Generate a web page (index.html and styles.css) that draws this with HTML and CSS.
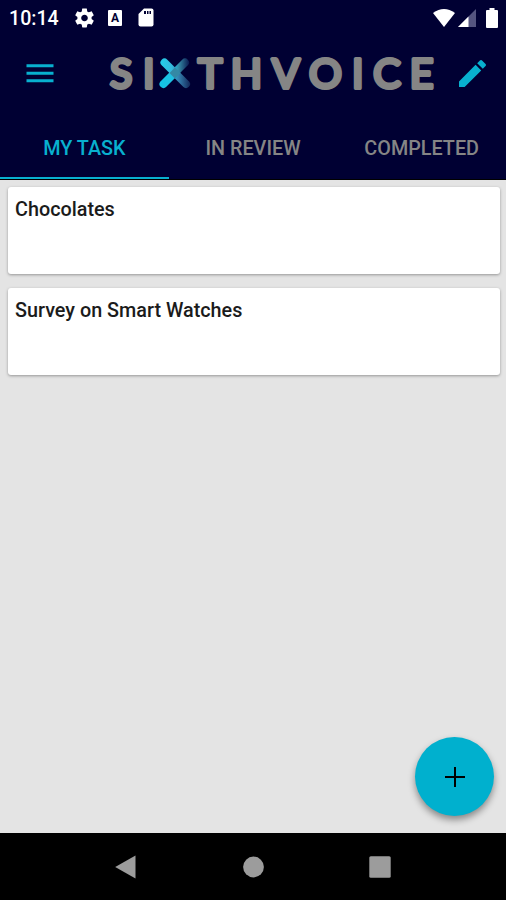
FILE: index.html
```
<!DOCTYPE html>
<html lang="en">
<head>
  <meta charset="UTF-8">
  <meta name="viewport" content="width=device-width, initial-scale=1">
  <title>SixthVoice</title>
  <link rel="stylesheet" href="styles.css">
</head>
<body>
  <header class="header">
    <div class="status-bar">
      <span class="clock">10:14</span>
      <svg class="icon-gear" width="19" height="20" viewBox="2 2 20 20"><path fill="#fff" d="M19.43 12.98c.04-.32.07-.64.07-.98s-.03-.66-.07-.98l2.11-1.65c.19-.15.24-.42.12-.64l-2-3.46c-.12-.22-.39-.3-.61-.22l-2.49 1c-.52-.4-1.08-.73-1.69-.98l-.38-2.65C14.46 2.18 14.25 2 14 2h-4c-.25 0-.46.18-.49.42l-.38 2.65c-.61.25-1.17.59-1.69.98l-2.49-1c-.23-.09-.49 0-.61.22l-2 3.46c-.13.22-.07.49.12.64l2.11 1.65c-.04.32-.07.65-.07.98s.03.66.07.98l-2.11 1.65c-.19.15-.24.42-.12.64l2 3.46c.12.22.39.3.61.22l2.49-1c.52.4 1.08.73 1.69.98l.38 2.65c.03.24.24.42.49.42h4c.25 0 .46-.18.49-.42l.38-2.65c.61-.25 1.17-.59 1.69-.98l2.49 1c.23.09.49 0 .61-.22l2-3.46c.12-.22.07-.49-.12-.64l-2.11-1.65zM12 15.500c-1.930 0-3.500-1.570-3.500-3.500s1.570-3.500 3.500-3.500 3.500 1.570 3.500 3.500-1.570 3.500-3.500 3.500z"/></svg>
      <span class="icon-letter">A</span>
      <svg class="icon-sd" width="16" height="19" viewBox="0 0 16 19"><path fill="#fff" d="M6 0.500H13.500Q15.500 .5 15.500 2.500V16.500Q15.500 18.500 13.500 18.500H2.500Q.5 18.500 .5 16.500V6z"/><path fill="#000033" d="M6 3h2v3H6zM9 3h1.500v3H9zM11.500 3h1.500v3h-1.500z"/></svg>
      <div class="status-right">
        <svg width="22" height="18" viewBox="0 0 22 18"><path fill="#fff" d="M0 4Q11-4 22 4L11 18z"/></svg>
        <svg width="18" height="18" viewBox="0 0 18 18"><path fill="#555580" d="M18 0v18H0z"/><path fill="#fff" d="M10.500 7.500V18H0z"/></svg>
        <svg class="icon-battery" width="12" height="20" viewBox="0 0 12 20"><path fill="#fff" d="M3.500 0h5v2H11q1 0 1 1v16q0 1-1 1H1q-1 0-1-1V3q0-1 1-1h2.500z"/></svg>
      </div>
    </div>

    <div class="toolbar">
      <svg class="icon-menu" width="28" height="20" viewBox="0 0 28 20"><path stroke="#08b0cf" stroke-width="3" d="M.5 1.700h27M.5 9.200h27M.5 16.700h27"/></svg>
      <svg class="logo" width="336" height="70" viewBox="102 39 336 70">
        <defs>
          <linearGradient id="fade" gradientUnits="userSpaceOnUse" x1="162" y1="0" x2="190" y2="0">
            <stop offset="0" stop-color="#13c3e6"/>
            <stop offset=".4" stop-color="#1fc0e2"/>
            <stop offset=".6" stop-color="#3489a5"/>
            <stop offset="1" stop-color="#07104a"/>
          </linearGradient>
          <linearGradient id="beam" gradientUnits="userSpaceOnUse" x1="162" y1="0" x2="190" y2="0">
            <stop offset="0" stop-color="#25cbe8"/>
            <stop offset=".35" stop-color="#35b9dc"/>
            <stop offset=".6" stop-color="#347fae"/>
            <stop offset="1" stop-color="#14285a"/>
          </linearGradient>
        </defs>
        <text class="logo-text" y="88" x="121">S</text>
        <text class="logo-text" y="88" x="148.700">I</text>
        <g fill="none" stroke-width="8" stroke-linecap="round">
          <path stroke="url(#fade)" d="M163.500 84L185 62.500"/>
          <path stroke="url(#beam)" d="M164.500 62.500L186 84"/>
        </g>
        <path fill="#3489a5" d="M175 67.500l5.500 5.500-5.500 5.500-5.500-5.500z"/>
        <text class="logo-text" y="88" x="210">T</text>
        <text class="logo-text" y="88" x="246.500">H</text>
        <text class="logo-text" y="88" x="286">V</text>
        <text class="logo-text" y="88" x="325.500">O</text>
        <text class="logo-text" y="88" x="357.700">I</text>
        <text class="logo-text" y="88" x="387">C</text>
        <text class="logo-text" y="88" x="421.500">E</text>
      </svg>
      <svg class="icon-edit" width="27" height="27" viewBox="3 3 18 18"><path fill="#08b0cf" d="M3 17.250V21h3.750L17.810 9.940l-3.750-3.750L3 17.250zM20.710 7.040c.39-.39.39-1.020 0-1.410l-2.340-2.340c-.39-.39-1.020-.39-1.410 0l-1.830 1.830 3.750 3.750 1.830-1.830z"/></svg>
    </div>

    <nav class="tabs">
      <div class="tab active">MY TASK</div>
      <div class="tab">IN REVIEW</div>
      <div class="tab">COMPLETED</div>
    </nav>
  </header>

  <main class="content">
    <div class="card">Chocolates</div>
    <div class="card">Survey on Smart Watches</div>
    <button class="fab" aria-label="Add">
      <svg width="20" height="20" viewBox="0 0 20 20"><path stroke="#000" stroke-width="2" d="M10 0v20M0 10h20"/></svg>
    </button>
  </main>

  <footer class="nav-bar">
    <svg width="22" height="24" viewBox="0 0 22 24"><path fill="#9c9c9c" d="M20.500 .5v23L.2 12z"/></svg>
    <svg width="22" height="22" viewBox="0 0 22 22"><circle cx="11.500" cy="11" r="10.400" fill="#9c9c9c"/></svg>
    <svg width="22" height="22" viewBox="0 0 22 22"><rect x=".3" y=".3" width="21.400" height="21.400" rx="1.500" fill="#9c9c9c"/></svg>
  </footer>
</body>
</html>
```

FILE: styles.css
```
* {
  box-sizing: border-box;
}

body {
  margin: 0;
  height: 900px;
  display: flex;
  flex-direction: column;
  font-family: Roboto, sans-serif;
  background-color: #e4e4e4;
  overflow: hidden;
}

svg {
  display: block;
  flex: none;
}

.header {
  height: 180px;
  background-color: #000033;
  border-bottom: 1px solid #000;
}

.status-bar {
  display: flex;
  align-items: center;
  height: 35px;
  padding: 0 8px 0 9px;
  color: #fff;
}

.clock {
  width: 66px;
  padding-top: 1px;
  font-size: 19.6px;
  font-weight: 500;
}

.icon-letter {
  width: 14px;
  height: 16px;
  margin: 0 16px 0 14px;
  border-radius: 1px;
  background-color: #fff;
  color: #000033;
  font-size: 12px;
  font-weight: 700;
  line-height: 16px;
  text-align: center;
}

.status-right {
  display: flex;
  align-items: center;
  gap: 4px;
  margin-left: auto;
}

.status-right svg:first-child {
  margin-right: -1px;
}

.icon-battery {
  margin-left: 6px;
}

.toolbar {
  display: flex;
  align-items: center;
  height: 77px;
  padding: 0 20px 0 26px;
}

.logo {
  margin-left: 48px;
}

.logo-text {
  font-family: Lato, sans-serif;
  font-size: 41px;
  font-weight: 400;
  text-anchor: middle;
  fill: #858585;
  stroke: #858585;
  stroke-width: 4px;
  stroke-linejoin: round;
}

.icon-edit {
  margin-left: auto;
}

.tabs {
  display: flex;
  height: 67px;
}

.tab {
  flex: 1;
  padding-top: 25px;
  color: #858585;
  font-size: 19.8px;
  font-weight: 500;
  line-height: 24px;
  text-align: center;
}

.tab.active {
  color: #08b0cf;
  border-bottom: 2px solid #08b0cf;
}

.content {
  position: relative;
  flex: 1;
  padding: 7px 6px 0 8px;
}

.card {
  height: 87px;
  margin-bottom: 14px;
  padding: 11px 7px;
  border-radius: 3px;
  background-color: #fff;
  box-shadow: 0 1px 3px rgba(0, 0, 0, 0.35);
  color: #1b1b1b;
  font-size: 19.8px;
  font-weight: 500;
  line-height: 24px;
}

.fab {
  position: absolute;
  right: 12px;
  bottom: 17px;
  width: 79px;
  height: 79px;
  padding: 0;
  display: flex;
  align-items: center;
  justify-content: center;
  border: none;
  border-radius: 50%;
  background-color: #00b0ce;
  box-shadow: 0 4px 7px rgba(0, 0, 0, 0.4);
}

.nav-bar {
  display: flex;
  align-items: center;
  justify-content: space-between;
  height: 67px;
  padding: 0 115px;
  background-color: #000;
}
```
